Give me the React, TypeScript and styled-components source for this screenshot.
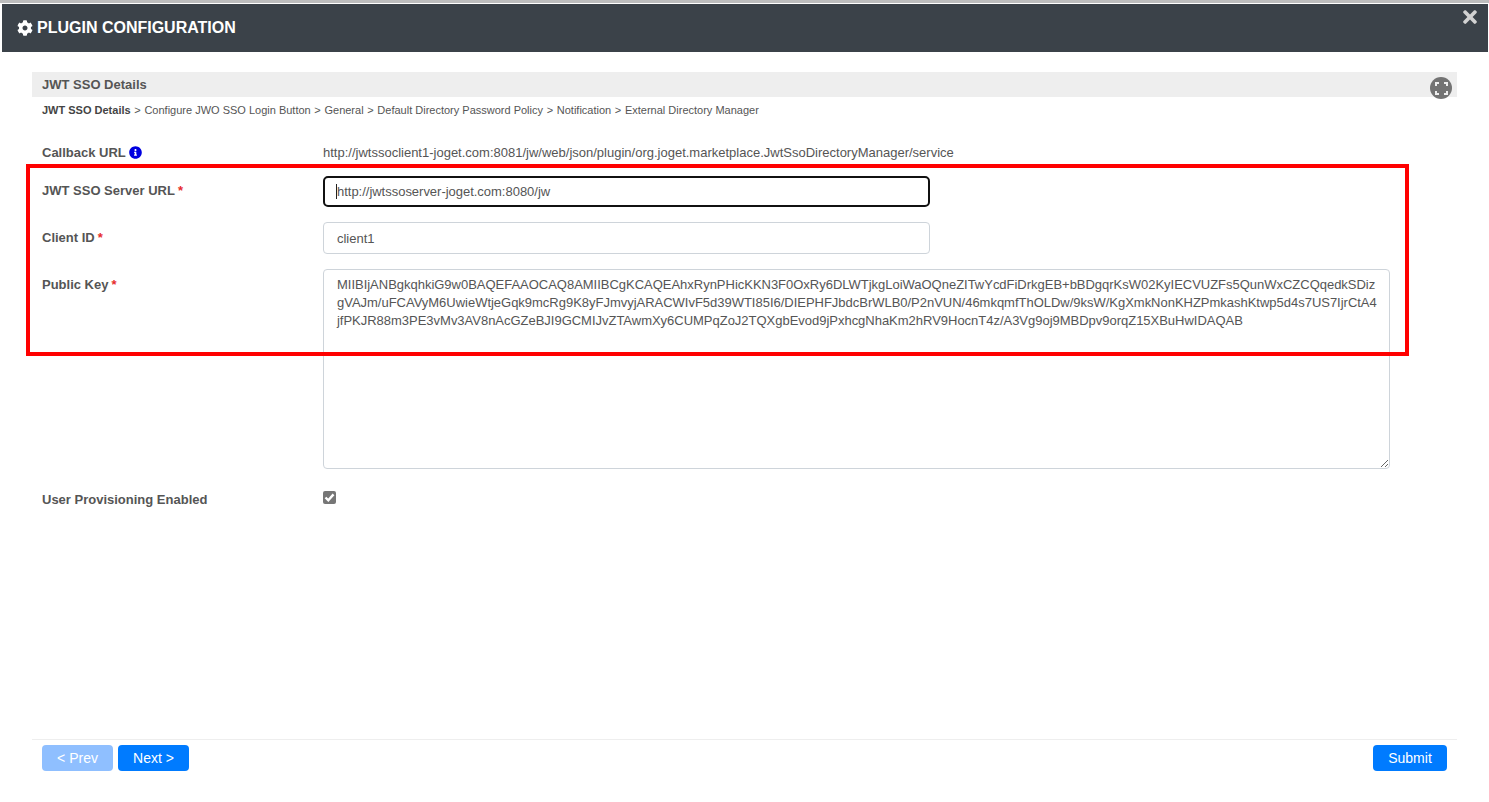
import React, { useEffect, useRef } from "react";
import styled, { createGlobalStyle } from "styled-components";
import { FaCog, FaTimes, FaInfoCircle } from "react-icons/fa";

const Global = createGlobalStyle`
  html, body { margin: 0; padding: 0; background: #fff; }
  body { font-family: "Liberation Sans", Arial, sans-serif; color: #555; overflow: hidden; }
  * { box-sizing: border-box; }
`;

const Page = styled.div`
  position: relative;
  height: 802px;
  width: 1489px;
  display: flex;
  flex-direction: column;
  border-top: 3px solid #bdbdbd;
  padding-top: 1px;
`;

const Header = styled.header`
  position: relative;
  height: 48px;
  margin: 0 1px 0 2px;
  flex: none;
  background: #3b4249;
  color: #fff;
  display: flex;
  align-items: center;
  padding-left: 15px;
  gap: 4px;
  font-size: 16px;
  font-weight: 700;
`;

const Close = styled.button`
  position: absolute;
  top: 3px;
  right: 8px;
  width: 20px;
  height: 20px;
  padding: 0;
  border: 0;
  background: none;
  color: #d2d2d2;
  font-size: 20px;
  display: flex;
  align-items: center;
  justify-content: center;
`;

const Body = styled.main`
  flex: 1;
  display: flex;
  flex-direction: column;
  padding: 20px 32px 0;
`;

const TitleBar = styled.div`
  position: relative;
  height: 25px;
  flex: none;
  background: #eee;
  padding-left: 10px;
  font-size: 13px;
  font-weight: 700;
  line-height: 26px;
  color: #555;
`;

const Fullscreen = styled.button`
  position: absolute;
  right: 5px;
  top: 5px;
  width: 22px;
  height: 22px;
  padding: 0;
  border: 0;
  border-radius: 50%;
  background: #737373;
  display: flex;
  align-items: center;
  justify-content: center;
`;

const Crumbs = styled.nav`
  height: 13px;
  margin-top: 7px;
  padding-left: 10px;
  font-size: 11px;
  line-height: 13px;
  color: #555;
  white-space: nowrap;
`;

const CrumbActive = styled.strong`
  font-weight: 700;
  color: #444;
`;

const CrumbSep = styled.span`
  padding: 0 0.6px;
`;

const Form = styled.form`
  margin-top: 27px;
  padding-left: 10px;
  display: flex;
  flex-direction: column;
`;

const Row = styled.div<{ $gap: number }>`
  display: grid;
  grid-template-columns: 281px 1fr;
  margin-bottom: ${(p) => p.$gap}px;
`;

const Label = styled.label<{ $top?: number }>`
  font-size: 13px;
  font-weight: 700;
  padding-top: ${(p) => p.$top ?? 0}px;
  line-height: 17px;
  color: #555;
  display: flex;
  align-items: center;
  align-self: start;
  gap: 3px;
`;

const Required = styled.span`
  color: #e62c2c;
  font-weight: 700;
`;

const ReadOnly = styled.div`
  font-size: 13px;
  line-height: 17px;
  color: #555;
`;

const FieldBox = styled.div`
  position: relative;
  width: 607px;
`;

const Caret = styled.span`
  position: absolute;
  left: 13px;
  top: 8px;
  width: 1px;
  height: 15px;
  background: #222;
`;

const TextInput = styled.input<{ $active?: boolean }>`
  display: block;
  width: 607px;
  height: ${(p) => (p.$active ? 31 : 32)}px;
  padding: 0 ${(p) => (p.$active ? 12 : 13)}px;
  border: ${(p) => (p.$active ? "2px solid #111" : "1px solid #ced4da")};
  border-radius: ${(p) => (p.$active ? 5 : 4)}px;
  background: #fff;
  font: 13px "Liberation Sans", Arial, sans-serif;
  letter-spacing: -0.02px;
  color: #555;
  outline: none;
`;

const Area = styled.textarea`
  display: block;
  width: 1067px;
  height: 200px;
  padding: 6px 4px 6px 13px;
  border: 1px solid #ced4da;
  border-radius: 4px;
  background: #fff;
  font: 13px/18px "Liberation Sans", Arial, sans-serif;
  letter-spacing: -0.018px;
  color: #555;
  outline: none;
  overflow: hidden;
`;

const Check = styled.span`
  display: flex;
  align-items: center;
  justify-content: center;
  width: 13px;
  height: 13px;
  border-radius: 2px;
  background: #767676;
  margin-top: 1px;
`;

const Footer = styled.footer`
  margin-top: auto;
  margin-bottom: 31px;
  border-top: 1px solid #eee;
  padding: 5px 10px 0;
  display: flex;
  gap: 5px;
`;

const Btn = styled.button<{ $w: number; $off?: boolean; $end?: boolean }>`
  width: ${(p) => p.$w}px;
  height: 26px;
  padding: 0;
  border: 0;
  border-radius: 4px;
  background: ${(p) => (p.$off ? "#8fbfff" : "#007bff")};
  color: #fff;
  font: 14px/26px "Liberation Sans", Arial, sans-serif;
  margin-left: ${(p) => (p.$end ? "auto" : "0")};
`;

const Highlight = styled.div`
  position: absolute;
  left: 26px;
  top: 161px;
  width: 1383px;
  height: 192px;
  border: 4px solid #f00;
  pointer-events: none;
`;

const KEY =
  "MIIBIjANBgkqhkiG9w0BAQEFAAOCAQ8AMIIBCgKCAQEAhxRynPHicKKN3F0OxRy6DLWTjkgLoiWaOQneZITwYcdFiDrkgEB+bBDgqrKsW02KyIECVUZFs5QunWxCZCQqedkSDiz\n" +
  "gVAJm/uFCAVyM6UwieWtjeGqk9mcRg9K8yFJmvyjARACWIvF5d39WTI85I6/DIEPHFJbdcBrWLB0/P2nVUN/46mkqmfThOLDw/9ksW/KgXmkNonKHZPmkashKtwp5d4s7US7IjrCtA4\n" +
  "jfPKJR88m3PE3vMv3AV8nAcGZeBJI9GCMIJvZTAwmXy6CUMPqZoJ2TQXgbEvod9jPxhcgNhaKm2hRV9HocnT4z/A3Vg9oj9MBDpv9orqZ15XBuHwIDAQAB";

const STEPS = [
  "Configure JWO SSO Login Button",
  "General",
  "Default Directory Password Policy",
  "Notification",
  "External Directory Manager",
];

export default function App() {
  const first = useRef<HTMLInputElement>(null);
  useEffect(() => {
    first.current?.focus();
    first.current?.setSelectionRange(0, 0);
  }, []);
  return (
    <Page>
      <Global />
      <Header>
        <FaCog size={16} />
        <span>PLUGIN CONFIGURATION</span>
        <Close aria-label="Close">
          <FaTimes />
        </Close>
      </Header>
      <Body>
        <TitleBar>
          JWT SSO Details
          <Fullscreen aria-label="Fullscreen">
            <svg width="13" height="13" viewBox="0 0 13 13" fill="none" stroke="#eee" strokeWidth="2">
              <path d="M1 4V1h3M9 1h3v3M12 9v3H9M4 12H1V9" />
            </svg>
          </Fullscreen>
        </TitleBar>
        <Crumbs>
          <CrumbActive>JWT SSO Details</CrumbActive>
          {STEPS.map((s) => (
            <React.Fragment key={s}>
              {" "}
              <CrumbSep>&gt;</CrumbSep> {s}
            </React.Fragment>
          ))}
        </Crumbs>
        <Form>
          <Row $gap={15}>
            <Label>
              <span>Callback URL</span> <FaInfoCircle size={13} color="#0000e0" />
            </Label>
            <ReadOnly>http://jwtssoclient1-joget.com:8081/jw/web/json/plugin/org.joget.marketplace.JwtSsoDirectoryManager/service</ReadOnly>
          </Row>
          <Row $gap={15}>
            <Label $top={6}>
              <span>JWT SSO Server URL</span> <Required>*</Required>
            </Label>
            <FieldBox>
              <TextInput $active ref={first} defaultValue="http://jwtssoserver-joget.com:8080/jw" />
              <Caret />
            </FieldBox>
          </Row>
          <Row $gap={15}>
            <Label $top={7}>
              <span>Client ID</span> <Required>*</Required>
            </Label>
            <TextInput defaultValue="client1" />
          </Row>
          <Row $gap={21}>
            <Label $top={7}>
              <span>Public Key</span> <Required>*</Required>
            </Label>
            <Area defaultValue={KEY} />
          </Row>
          <Row $gap={0}>
            <Label $top={1}>User Provisioning Enabled</Label>
            <Check>
              <svg width="11" height="11" viewBox="0 0 11 11" fill="none" stroke="#fff" strokeWidth="2.4">
                <path d="M1.5 5.5l2.8 2.8L9.5 2.4" />
              </svg>
            </Check>
          </Row>
        </Form>
        <Footer>
          <Btn $w={71} $off type="button">&lt; Prev</Btn>
          <Btn $w={71} type="button">Next &gt;</Btn>
          <Btn $w={74} $end type="button">Submit</Btn>
        </Footer>
      </Body>
      <Highlight />
    </Page>
  );
}
